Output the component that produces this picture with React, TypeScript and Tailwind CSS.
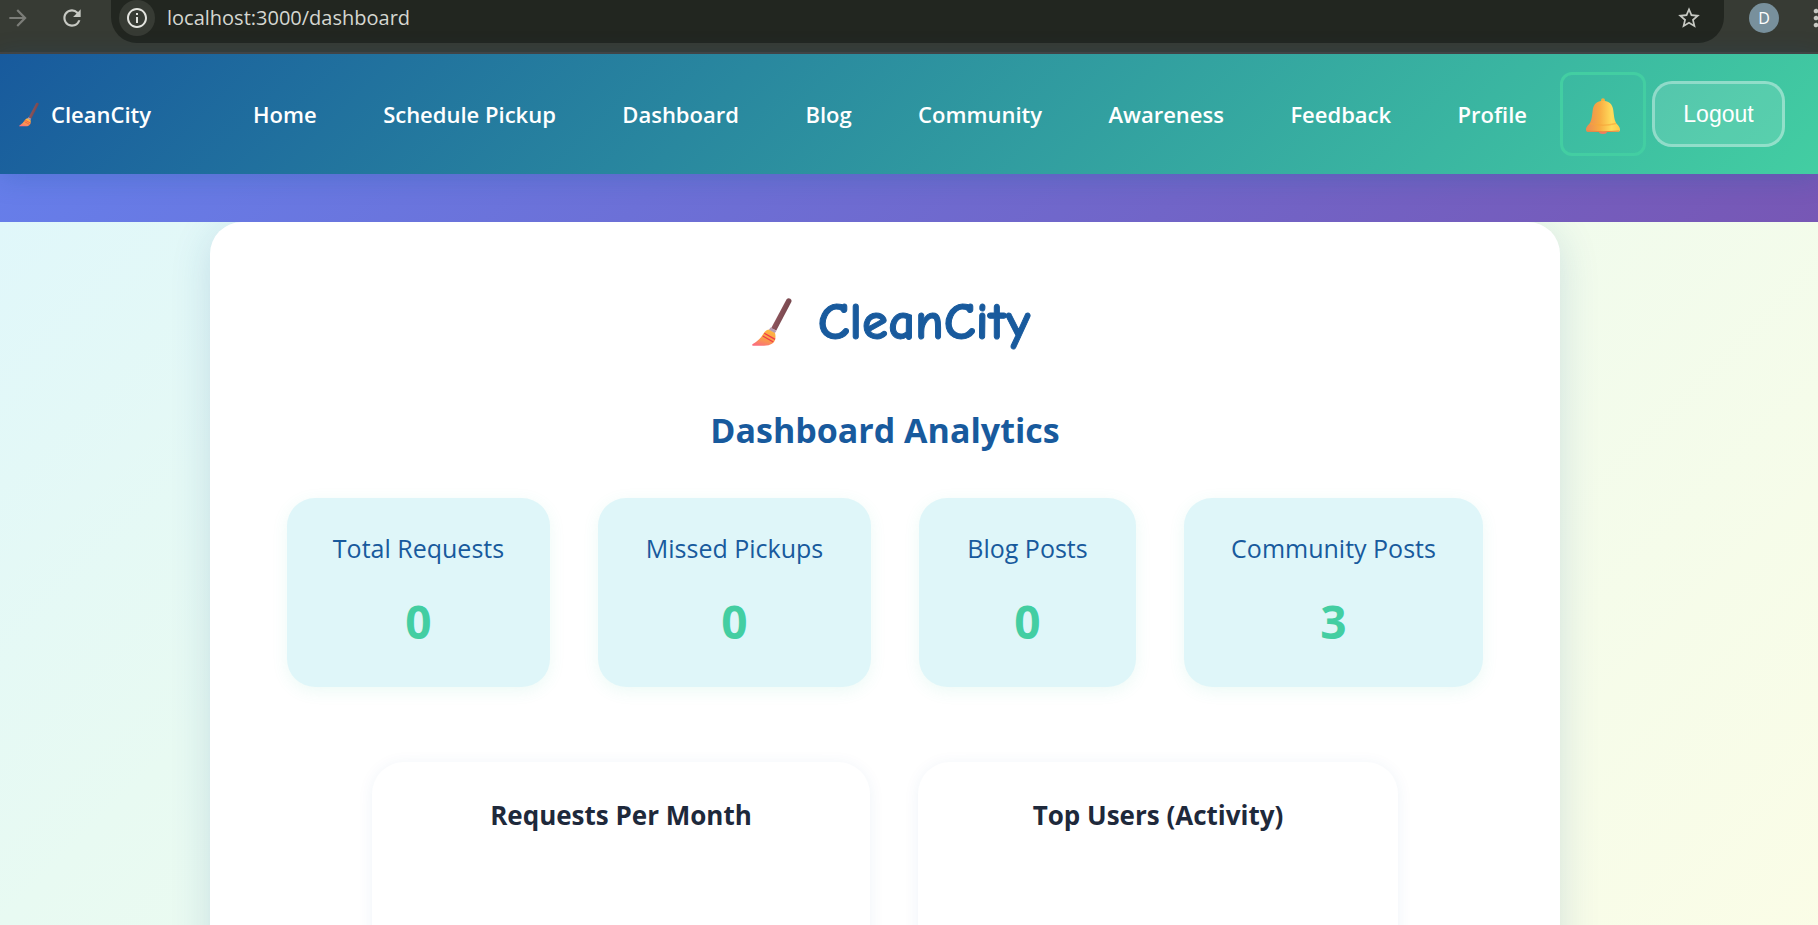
import React from "react";
import { MdArrowForward, MdRefresh, MdInfoOutline, MdStarBorder, MdMoreVert } from "react-icons/md";

const NAV = ["Home", "Schedule Pickup", "Dashboard", "Blog", "Community", "Awareness", "Feedback", "Profile"];

const STATS = [
  { label: "Total Requests", value: 0 },
  { label: "Missed Pickups", value: 0 },
  { label: "Blog Posts", value: 0 },
  { label: "Community Posts", value: 3 },
];

function Broom({ id, className }: { id: string; className: string }) {
  return (
    <svg viewBox="0 0 40 48" className={className} aria-hidden="true">
      <defs>
        <linearGradient id={`${id}-bristle`} x1="0.7" y1="0" x2="0.3" y2="1">
          <stop offset="0" stopColor="#ffb83f" />
          <stop offset="0.6" stopColor="#f99a4c" />
          <stop offset="1" stopColor="#fb6f7d" />
        </linearGradient>
        <linearGradient id={`${id}-handle`} x1="0" y1="0" x2="1" y2="0.5">
          <stop offset="0" stopColor="#a5626a" />
          <stop offset="1" stopColor="#6d4248" />
        </linearGradient>
      </defs>
      <path d="M34.600 1.200q1.700-1.500 3.700-.4 1.900 1.200 1 3.300L24.300 32.500l-5.200-2.300z" fill={`url(#${id}-handle)`} />
      <path d="M17.500 31.500 23 34.800q1.800 8-3 11-2.800 1.900-8 1.900H1q-1.300-.2-.6-1.400Q8 42 11.500 35.500q2.500-4 6-4z" fill={`url(#${id}-bristle)`} />
      <path d="m12.300 35.200 10.800 6.200M10.800 38l10.500 6" stroke="#f03a4b" strokeWidth="1.300" fill="none" />
      <path d="m18.500 29.400 6 3.300-1.600 2.400-5.900-3.300z" fill="#b79bb0" />
    </svg>
  );
}

function Bell() {
  return (
    <svg viewBox="0 0 34 36" className="h-9 w-[34px]" aria-hidden="true">
      <defs>
        <linearGradient id="bell-body" x1="0" y1="0" x2="1" y2="0">
          <stop offset="0" stopColor="#ea8b52" />
          <stop offset="0.4" stopColor="#f8ac42" />
          <stop offset="0.75" stopColor="#ffdc5c" />
          <stop offset="1" stopColor="#ffcb4a" />
        </linearGradient>
      </defs>
      <circle cx="17" cy="2.300" r="2" fill="#f5ad3c" />
      <ellipse cx="17" cy="33.500" rx="4" ry="2.500" fill="#f57c63" />
      <path d="M17 2.800c6 0 9.500 3.400 10.300 9.500.7 5.400.9 9.300 2.500 12.200 1.500 2.500 4.200 4 4.200 7 0 1.500-.7 2.300-2 2.300H2c-1.300 0-2-.8-2-2.300 0-3 2.700-4.500 4.200-7 1.600-2.900 1.800-6.800 2.500-12.200C7.500 6.200 11 2.800 17 2.800z" fill="url(#bell-body)" />
      <path d="M4 25.500q13 3.500 26 0" stroke="#f6a53a" strokeOpacity="0.600" strokeWidth="1.500" fill="none" />
      <path d="M1 33q16 1.600 32 0" stroke="#e98546" strokeWidth="1" fill="none" />
    </svg>
  );
}

function BrowserBar() {
  return (
    <div className="flex h-[54px] items-start overflow-hidden border-b-2 border-[#45433f] bg-[#373b34]">
      <div className="flex h-9 shrink-0 items-center gap-7 pl-[5px]">
        <button aria-label="Forward" className="text-[#7b7d78]"><MdArrowForward size={26} /></button>
        <button aria-label="Reload" className="text-[#c7c9c3]"><MdRefresh size={26} /></button>
      </div>
      <div className="-mt-2 ml-[26px] flex h-[51px] min-w-0 flex-1 items-center rounded-b-[26px] bg-[#222620] pr-[22px] pl-2">
        <button aria-label="Site information" className="flex size-9 shrink-0 items-center justify-center rounded-full bg-[#373b34] text-[#e3e4df]">
          <MdInfoOutline size={24} />
        </button>
        <input
          aria-label="Address"
          readOnly
          value="localhost:3000/dashboard"
          className="ml-3 min-w-0 flex-1 bg-transparent text-[20px] text-[#d5d7d1] outline-none"
        />
        <button aria-label="Bookmark" className="text-[#c7c9c3]"><MdStarBorder size={26} /></button>
      </div>
      <div className="flex h-9 shrink-0 items-center pl-[25px]">
        <button aria-label="Account" className="flex size-[30px] items-center justify-center rounded-full bg-[#78909c] text-[16px] text-white">D</button>
        <button aria-label="Menu" className="-mr-3 ml-[23px] text-[#c7c9c3]"><MdMoreVert size={28} /></button>
      </div>
    </div>
  );
}

export default function App() {
  return (
    <div className="flex h-screen flex-col overflow-hidden font-['Open_Sans','Noto_Sans',sans-serif]">
      <BrowserBar />
      <header className="relative z-10 flex h-[120px] shrink-0 items-center bg-[linear-gradient(135deg,#185a9d,#43cea2)] pr-[33px] pl-[19px] text-[22px] font-semibold text-white shadow-[0_4px_24px_rgba(24,90,157,0.25)]">
        <a href="#home" className="flex items-center gap-3">
          <Broom id="nav" className="h-[25px] w-5" />
          CleanCity
        </a>
        <nav className="ml-[69px] flex flex-1 items-center justify-between">
          {NAV.map((item) => (
            <a key={item} href={`#${item}`} className="px-[33px] whitespace-nowrap">{item}</a>
          ))}
        </nav>
        <button aria-label="Notifications" className="flex h-[84px] w-[86px] shrink-0 items-center justify-center rounded-xl border-3 border-[#43cea2] pt-1">
          <Bell />
        </button>
        <button className="ml-1.5 h-[66px] w-[133px] shrink-0 rounded-[20px] border-3 border-white/35 bg-white/12 font-['Liberation_Sans',Arial,sans-serif] text-[23px] font-normal">
          Logout
        </button>
      </header>
      <div className="h-12 shrink-0 bg-[linear-gradient(135deg,#667eea,#7757b5)]" />
      <main className="flex min-h-0 flex-1 justify-center overflow-hidden bg-[linear-gradient(135deg,#e0f7fa_0%,#e8faf2_28%,#fdfde5_110%)] pr-12">
        <div className="flex h-[1200px] w-full max-w-[1350px] flex-col items-center rounded-[32px] bg-white pt-[64px] shadow-[0_8px_40px_rgba(24,90,157,0.16)]">
          <h1 className="flex h-[72px] items-center gap-[26px] pl-3 font-['Comic_Sans_MS','Comic_Neue',Lato,sans-serif] text-[53px] font-bold text-[#185a9d] [-webkit-text-stroke:1px_#185a9d]">
            <Broom id="hero" className="h-12 w-10" />
            CleanCity
          </h1>
          <h2 className="mt-[45px] text-[34px] leading-[54px] font-bold text-[#185a9d]">Dashboard Analytics</h2>
          <dl className="mt-[41px] grid w-full max-w-[1196px] grid-cols-[263fr_273fr_217fr_299fr] gap-12">
            {STATS.map(({ label, value }) => (
              <div key={label} className="flex h-[189px] flex-col items-center rounded-[28px] bg-[#dff6f9] pt-[30px] whitespace-nowrap shadow-[0_4px_16px_rgba(67,206,162,0.1)]">
                <dt className="text-[25px] leading-[40px] text-[#185a9d]">{label}</dt>
                <dd className="mt-[21px] text-[46px] leading-[64px] font-bold text-[#43cea2]">{value}</dd>
              </div>
            ))}
          </dl>
          <div className="mt-[75px] flex flex-1 gap-12 text-center text-[26px] leading-[40px] font-bold text-[#1e293b]">
            <section className="w-[498px] rounded-[32px] pt-[33px] shadow-[0_2px_16px_rgba(24,90,157,0.07)]">
              <h3>Requests Per Month</h3>
            </section>
            <section className="w-[480px] rounded-[32px] pt-[33px] shadow-[0_2px_16px_rgba(24,90,157,0.07)]">
              <h3>Top Users (Activity)</h3>
            </section>
          </div>
        </div>
      </main>
    </div>
  );
}
